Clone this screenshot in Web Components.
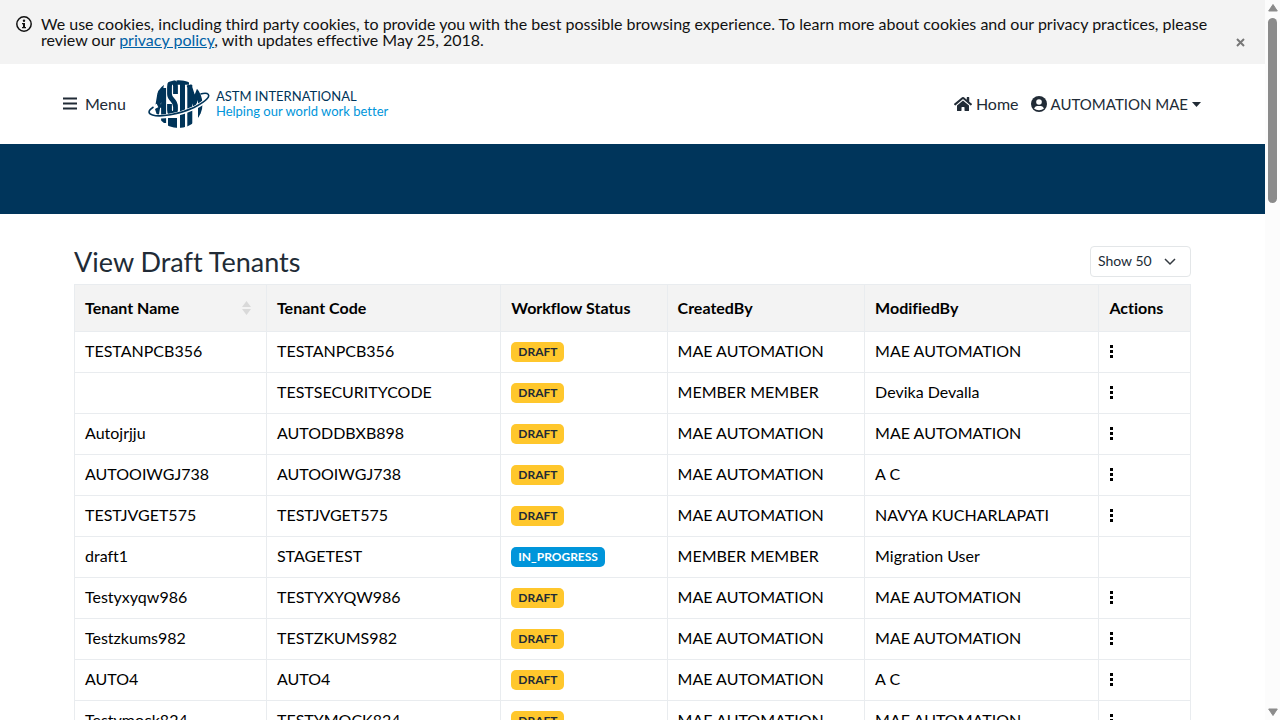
<!DOCTYPE html>
<html lang="en">
<head>
<meta charset="utf-8">
<title>View Draft Tenants</title>
<style>
html,body{margin:0;height:100%;overflow:hidden;background:#fff}
body{font:16px/24px Lato,"Open Sans",sans-serif;font-variant-ligatures:none;color:#212b36}
</style>
</head>
<body>
<tenant-app>
  <cookie-notice></cookie-notice>
  <site-header></site-header>
  <page-banner></page-banner>
  <tenant-list></tenant-list>
</tenant-app>
<script>
const define = (name, html, setup) => customElements.define(name, class extends HTMLElement {
  constructor() {
    super();
    const root = this.attachShadow({mode: 'open'});
    root.innerHTML = html;
    if (setup) setup(root, this);
  }
});

define('scroll-rail', `
<style>
:host{display:flex;flex-direction:column;align-items:center;justify-content:space-between;background:#fcfcfc;padding:4px 0;box-sizing:border-box;width:15px;height:100vh}
.track{flex:1;padding:6px 0;width:9px}
.thumb{height:27%;border-radius:5px;background:#8b8b8b}
svg{display:block}
</style>
<svg width="10" height="8" viewBox="0 0 10 8"><path d="M5 0.5 9.3 7H.7z" fill="#8b8b8b" stroke="#8b8b8b" stroke-linejoin="round"/></svg>
<div class="track"><div class="thumb"></div></div>
<svg width="10" height="8" viewBox="0 0 10 8"><path d="M5 7.5 9.3 1H.7z" fill="#8b8b8b" stroke="#8b8b8b" stroke-linejoin="round"/></svg>
`);

define('tenant-app', `
<style>
:host{display:grid;grid-template-columns:minmax(0,1fr) auto;height:100vh;overflow:hidden}
main{height:100vh;overflow:hidden}
</style>
<main><slot></slot></main><scroll-rail></scroll-rail>
`);

define('cookie-notice', `
<style>
:host{display:flex;background:#f3f3f3;color:#111;padding:16px 16px 0;gap:9px}
p{margin:0 0 16px;flex:1;line-height:16px}
a{color:#0061a6}
svg{flex:none}
button{align-self:flex-end;border:0;background:none;padding:4px;margin-bottom:13px;color:#777;line-height:0}
</style>
<svg width="16" height="16" viewBox="0 0 16 16" aria-hidden="true"><circle cx="8" cy="8" r="7.2" fill="none" stroke="#111" stroke-width="1.5"/><circle cx="8" cy="4.700" r="1.200" fill="#111"/><path d="M6 7h3v4h1v1.300H6V11h1V8.300H6z" fill="#111"/></svg>
<p>We use cookies, including third party cookies, to provide you with the best possible browsing experience. To learn more about cookies and our privacy practices, please review our <a href="#">privacy policy</a>, with updates effective May 25, 2018.</p>
<button aria-label="Close"><svg width="9" height="9" viewBox="0 0 9 9"><path d="M1 1l7 7M8 1L1 8" stroke="#777" stroke-width="2"/></svg></button>
`);

define('astm-logo', `
<style>
:host{display:block}
a{display:flex;align-items:center;gap:6px;text-decoration:none}
.words{display:flex;flex-direction:column;font-size:13px;line-height:15px;color:#003459}
.tag{color:#0095da}
</style>
<a href="#">
<svg width="62" height="50" viewBox="0 0 62 50" aria-hidden="true">
<defs><clipPath id="globe"><circle cx="30.500" cy="25" r="24"/></clipPath></defs>
<g clip-path="url(#globe)" fill="none" stroke="#003459">
<path stroke-width="5" d="M8 38 13.500 5M15.600 9V44"/>
<path stroke-width="3.500" d="M9 27h7"/>
<path stroke-width="4.800" d="M27.500 15V7q0-4-3-4T21.500 8v7q0 3 3 6t3 7v3q0 3.500-3 3.500T21.500 31v-6"/>
<path stroke-width="9" d="M24.500 39v12"/>
<path stroke-width="4.500" d="M28.500 3.500H41"/>
<path stroke-width="5" d="M34.500 3V50"/>
<path stroke-width="5" d="M41.800 6V50M41 6l5.500 17L52 9M52.500 12V50"/>
</g>
<path d="M9.500 26.500C2 30 .5 34 4.500 36C12 39.500 31 36 46 29C59 22.500 63.500 16.500 58.500 14.500" fill="none" stroke="#fff" stroke-width="4"/>
<path d="M5.500 28C0 31.500-.5 34.500 4.500 36C12 38.500 31 35.500 46 28.500C59 22 63.500 16.500 59 14.500Q57 13.800 52.500 15" fill="none" stroke="#003459" stroke-width="1.600"/>
</svg>
<span class="words"><span>ASTM INTERNATIONAL</span><span class="tag">Helping our world work better</span></span>
</a>
`);

define('site-header', `
<style>
:host{display:flex;align-items:center;height:80px;padding:0 64px 0 63px;box-sizing:border-box}
button,nav a{font:inherit;font-variant-ligatures:none;color:#212b36;background:none;border:0;padding:0;display:flex;align-items:center;text-decoration:none}
.menu{gap:8px;margin-right:22px}
nav{margin-left:auto;display:flex;gap:12px}
nav a,.user{gap:4px}
.user{font-size:15px}
nav svg,.menu svg{display:block}
</style>
<button class="menu"><svg width="14" height="14" viewBox="0 0 14 14"><path d="M0 1.500h14M0 6.500h14M0 11.500h14" stroke="#212b36" stroke-width="2.200"/></svg>Menu</button>
<astm-logo></astm-logo>
<nav>
<a href="#"><svg width="18" height="16" viewBox="0 0 576 512"><path fill="#212b36" d="M280.400 148.300 96 300.100V464a16 16 0 0 0 16 16l112.100-.3a16 16 0 0 0 15.900-16V368a16 16 0 0 1 16-16h64a16 16 0 0 1 16 16v95.600a16 16 0 0 0 16 16.100L464 480a16 16 0 0 0 16-16V300L295.700 148.300a12.200 12.200 0 0 0-15.300 0zM571.600 251.500 488 182.600V44.100a12 12 0 0 0-12-12h-56a12 12 0 0 0-12 12v72.600L318.500 43a48 48 0 0 0-61 0L4.300 251.500a12 12 0 0 0-1.600 16.900l25.500 31a12 12 0 0 0 16.900 1.600l235.300-193.700a12.200 12.200 0 0 1 15.300 0L530.900 301a12 12 0 0 0 16.900-1.600l25.500-31a12 12 0 0 0-1.700-16.900z"/></svg>Home</a>
<button class="user"><svg width="16" height="16" viewBox="0 0 16 16"><circle cx="8" cy="8" r="8" fill="#212b36"/><circle cx="8" cy="6" r="2.800" fill="#fff"/><path d="M3 12.500Q4 10 6 10h4q2 0 3 2.500Q11 14.200 8 14.200T3 12.500z" fill="#fff"/></svg>AUTOMATION MAE<svg width="9" height="5" viewBox="0 0 9 5"><path d="M0 0h9L4.500 5z" fill="#212b36"/></svg></button>
</nav>
`);

define('page-banner', `<style>:host{display:block;height:70px;background:#00355b}</style>`);

define('status-badge', `
<style>
:host{display:block;width:fit-content;font-size:12px;font-weight:700;line-height:20px;padding:0 7px;border-radius:5px;background:#ffc72c;color:#212b36}
:host([kind=progress]){background:#0095da;color:#fff}
</style><slot></slot>`);

const rows = [
['TESTANPCB356','TESTANPCB356','MAE AUTOMATION','MAE AUTOMATION'],
['','TESTSECURITYCODE','MEMBER MEMBER','Devika Devalla'],
['Autojrjju','AUTODDBXB898','MAE AUTOMATION','MAE AUTOMATION'],
['AUTOOIWGJ738','AUTOOIWGJ738','MAE AUTOMATION','A C'],
['TESTJVGET575','TESTJVGET575','MAE AUTOMATION','NAVYA KUCHARLAPATI'],
['draft1','STAGETEST','MEMBER MEMBER','Migration User',true],
['Testyxyqw986','TESTYXYQW986','MAE AUTOMATION','MAE AUTOMATION'],
['Testzkums982','TESTZKUMS982','MAE AUTOMATION','MAE AUTOMATION'],
['AUTO4','AUTO4','MAE AUTOMATION','A C'],
['Testymock824','TESTYMOCK824','MAE AUTOMATION','MAE AUTOMATION']];

define('tenant-list', `
<style>
:host{display:block;padding:32px 74px}
header{display:flex;justify-content:space-between;align-items:flex-start;margin-bottom:6px}
h1{margin:0;font-size:27px;line-height:32px;font-weight:400}
select{appearance:none;font:14px/20px Lato,sans-serif;color:#212b36;width:101px;height:31px;border:1px solid #e3e6e8;border-radius:4px;padding:0 7px 2px;
background:#fff url("data:image/svg+xml,%3Csvg xmlns='http://www.w3.org/2000/svg' width='12' height='8'%3E%3Cpath d='M1 1l5 5 5-5' fill='none' stroke='%23343a40' stroke-width='1.5'/%3E%3C/svg%3E") no-repeat right 14px center}
table{border-collapse:collapse;table-layout:fixed;width:100%;color:#000}
th,td{border:1px solid #e9ecef;padding:0 10px 2px;text-align:left;height:38px}
td.status{padding:0 10px;height:40px}
th{background:#f3f3f3;height:46px;padding:0 10px;font-weight:700}
.sort{display:flex;justify-content:space-between;align-items:center;padding-right:5px}
td button{border:0;background:none;padding:0;display:block}
svg{display:block}
</style>
<header><h1>View Draft Tenants</h1><select aria-label="Page size"><option>Show 50</option></select></header>
<table>
<colgroup><col style="width:17.2%"><col style="width:21%"><col style="width:14.9%"><col style="width:17.7%"><col style="width:21%"><col></colgroup>
<thead><tr><th><div class="sort">Tenant Name<svg width="9" height="14" viewBox="0 0 9 14"><path d="M4.500 0 9 6H0zM4.500 14 0 8h9z" fill="#d9d9d9"/></svg></div></th><th>Tenant Code</th><th>Workflow Status</th><th>CreatedBy</th><th>ModifiedBy</th><th>Actions</th></tr></thead>
<tbody></tbody></table>
`, root => {
  const dots = '<button aria-label="Row actions"><svg width="5" height="14" viewBox="0 0 5 14"><path d="M1 1h3v3H1zM1 6h3v3H1zM1 11h3v3H1z"/></svg></button>';
  root.querySelector('tbody').innerHTML = rows.map(([name, code, created, modified, progress]) =>
    `<tr><td>${name}</td><td>${code}</td><td class="status">${progress ? '<status-badge kind="progress">IN_PROGRESS</status-badge>' : '<status-badge>DRAFT</status-badge>'}</td><td>${created}</td><td>${modified}</td><td>${progress ? '' : dots}</td></tr>`).join('');
});
</script>
</body>
</html>
